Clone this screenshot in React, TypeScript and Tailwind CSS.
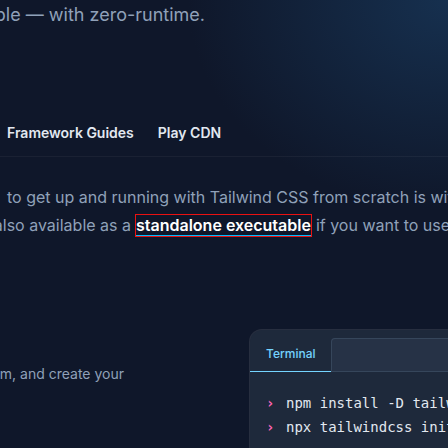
export default function App() {
  return (
    <div className="relative h-[448px] w-[448px] overflow-hidden bg-[#0f172a] bg-[radial-gradient(ellipse_260px_210px_at_100%_0%,#16304f_0%,#0f172a_100%)] pt-[1px] font-['Inter',sans-serif] antialiased">
      {/* intro, clipped on the left */}
      <div className="flex w-[205px] justify-end whitespace-nowrap text-lg leading-7 text-slate-400">
        <p>It’s fast, flexible, and reliable — with zero-runtime.</p>
      </div>

      <Tabs />

      <Intro />

      <Step />
    </div>
  );
}

function Tabs() {
  return (
    <div className="mt-[94px] border-b border-slate-200/5 pb-[13px]">
      <ul className="flex gap-6 whitespace-nowrap pl-[7px] text-sm font-semibold leading-5 text-slate-200">
        <li>Framework Guides</li>
        <li>Play CDN</li>
      </ul>
    </div>
  );
}

function Intro() {
  return (
    <div className="mt-[26px] whitespace-nowrap text-base leading-7 text-slate-400">
      <div className="flex">
        <span className="-ml-[2px] flex w-0 shrink-0 justify-end">
          <span>The simplest and fastest way</span>
        </span>
        <span className="pl-[9px]">to get up and running with Tailwind CSS from scratch is with the Tailwind CLI tool.</span>
      </div>
      <div className="flex">
        <span className="flex w-[131px] shrink-0 justify-end">
          <span>The CLI is also available as a</span>
        </span>
        <span className="pl-[5px]">
          <a className="border-b border-sky-400 font-semibold text-white outline outline-1 outline-[#ea1111]">
            standalone executable
          </a>
        </span>
        <span className="pl-[5px]">if you want to use it without installing Node.js.</span>
      </div>
    </div>
  );
}

function Step() {
  return (
    <div className="mt-[91px] flex">
      <div className="flex w-[124px] shrink-0 justify-end whitespace-nowrap pt-[32px] text-sm leading-6 text-slate-400">
        <p>Install tailwindcss via npm, and create your</p>
      </div>
      <div className="ml-[126px] w-[260px] shrink-0 overflow-hidden rounded-tl-xl bg-[#1e293b] ring-1 ring-white/10">
        <div className="flex pt-2 text-xs leading-6">
          <div className="border-b border-sky-300 px-4 pb-[5px] pt-[4px] font-medium text-sky-300">Terminal</div>
          <div className="flex-auto rounded-tl border border-r-0 border-slate-500/30 bg-slate-700/40" />
        </div>
        <div className="pl-4 pt-[19px] pb-6 font-['DejaVu_Sans_Mono',monospace] text-sm leading-6 text-slate-200 whitespace-nowrap">
          <div className="flex">
            <span className="w-5 shrink-0 font-bold text-pink-400">›</span>
            <span>npm install -D tailwindcss</span>
          </div>
          <div className="flex">
            <span className="w-5 shrink-0 font-bold text-pink-400">›</span>
            <span>npx tailwindcss init</span>
          </div>
        </div>
      </div>
    </div>
  );
}
